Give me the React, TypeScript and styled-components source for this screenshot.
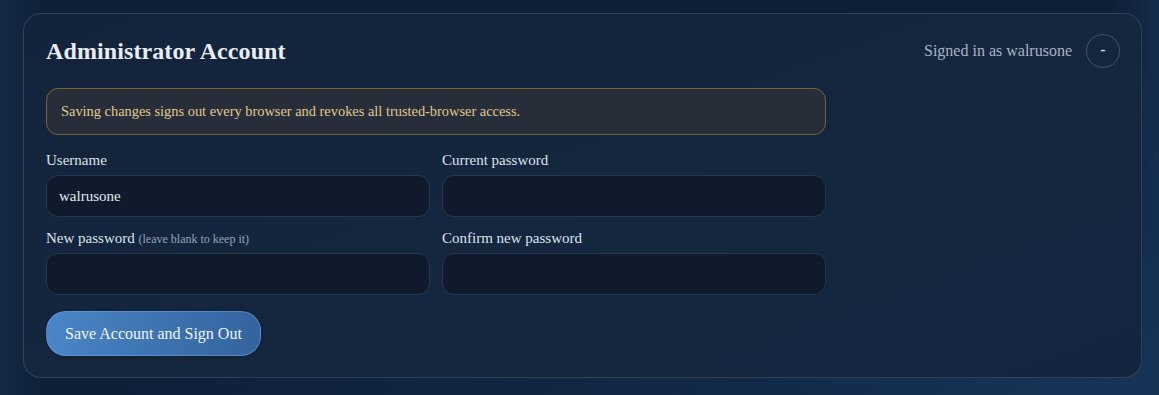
import React from "react";
import styled, { createGlobalStyle } from "styled-components";

const Global = createGlobalStyle`
  html, body { margin: 0; padding: 0; }
  body {
    font-family: "Liberation Serif", "Times New Roman", serif;
    background: radial-gradient(ellipse at 100% 100%, #17355a 0%, #122846 30%, #0f1f38 65%), #0f1f38;
    min-height: 395px;
    color: #e2e8f0;
  }
  * { box-sizing: border-box; }
`;

const Page = styled.div`
  padding: 13px 17px 17px 23px;
  background: linear-gradient(90deg, rgba(22,50,84,0.55) 0%, rgba(15,31,56,0) 4%, rgba(15,31,56,0) 96%, rgba(22,50,84,0.7) 100%);
`;

const Card = styled.section`
  border: 1px solid rgba(148, 163, 184, 0.22);
  border-radius: 18px;
  background: linear-gradient(160deg, #13233c 0%, #15263f 60%, #14263f 100%);
  padding: 20px 21px 21px 22px;
  height: 365px;
`;

const Header = styled.header`
  display: flex;
  align-items: center;
  justify-content: space-between;
  height: 34px;
`;

const Title = styled.h1`
  margin: 0;
  font-size: 24px;
  font-weight: 700;
  color: #e8edf5;
  letter-spacing: 0.1px;
`;

const Who = styled.div`
  display: flex;
  align-items: center;
  gap: 14px;
  font-size: 16px;
  color: #a8b4c4;
`;

const CircleBtn = styled.button`
  width: 34px;
  height: 34px;
  border-radius: 50%;
  border: 1px solid rgba(148, 163, 184, 0.35);
  background: transparent;
  color: #c9d5e5;
  font-family: "Liberation Serif", serif;
  font-size: 16px;
  font-weight: 700;
  display: flex;
  align-items: center;
  justify-content: center;
  padding: 0 0 2px;
`;

const Notice = styled.div`
  margin-top: 20px;
  width: 780px;
  border: 1px solid #7a6334;
  background: #272e39;
  border-radius: 12px;
  padding: 13px 14px;
  color: #e2c88f;
  font-size: 14.4px;
  line-height: 19px;
`;

const Grid = styled.div`
  margin-top: 16px;
  width: 780px;
  display: grid;
  grid-template-columns: 1fr 1fr;
  column-gap: 12px;
  row-gap: 12px;
`;

const Field = styled.label`
  display: flex;
  flex-direction: column;
  gap: 6px;
`;

const LabelText = styled.span`
  font-size: 15px;
  line-height: 18px;
  height: 18px;
  color: #dde4ee;
`;

const Hint = styled.small`
  font-size: 12px;
  line-height: 1;
  color: #94a3b8;
`;

const Input = styled.input`
  height: 42px;
  border-radius: 12px;
  border: 1px solid #26364c;
  background: #0f1b2c;
  color: #e2e8f0;
  font-family: "Liberation Serif", serif;
  font-size: 15px;
  padding: 0 12px;
  outline: none;
`;

const SaveButton = styled.button`
  margin-top: 16px;
  height: 45px;
  padding: 0 18px;
  border-radius: 20px;
  border: 1px solid rgba(120, 170, 230, 0.45);
  background: linear-gradient(100deg, #4a87c8 0%, #3e74b2 50%, #33639e 100%);
  color: #f1f5fb;
  font-family: "Liberation Serif", serif;
  font-size: 16px;
  box-shadow: 0 1px 3px rgba(0, 0, 0, 0.2);
`;

export default function App() {
  return (
    <>
      <Global />
      <Page>
        <Card>
          <Header>
            <Title>Administrator Account</Title>
            <Who>
              <span>Signed in as walrusone</span>
              <CircleBtn>-</CircleBtn>
            </Who>
          </Header>
          <Notice>
            Saving changes signs out every browser and revokes all trusted-browser access.
          </Notice>
          <Grid>
            <Field>
              <LabelText>Username</LabelText>
              <Input defaultValue="walrusone" />
            </Field>
            <Field>
              <LabelText>Current password</LabelText>
              <Input type="password" />
            </Field>
            <Field>
              <LabelText>
                New password <Hint>(leave blank to keep it)</Hint>
              </LabelText>
              <Input type="password" />
            </Field>
            <Field>
              <LabelText>Confirm new password</LabelText>
              <Input type="password" />
            </Field>
          </Grid>
          <SaveButton>Save Account and Sign Out</SaveButton>
        </Card>
      </Page>
    </>
  );
}
